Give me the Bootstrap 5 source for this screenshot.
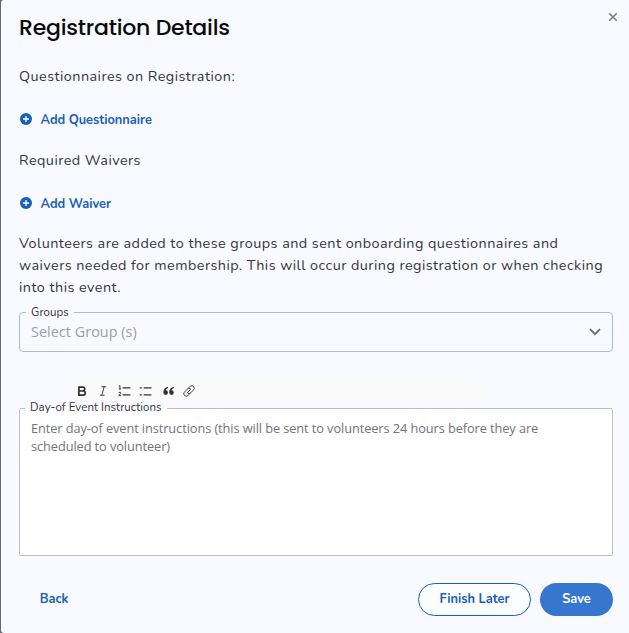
<!DOCTYPE html>
<html lang="en">
<head>
<meta charset="utf-8">
<meta name="viewport" content="width=device-width, initial-scale=1">
<title>Registration Details</title>
<link href="https://cdn.jsdelivr.net/npm/bootstrap@5.3.0/dist/css/bootstrap.min.css" rel="stylesheet">
<style>
body { background: #6a6a6e; font-family: Nunito, Lato, "Liberation Sans", sans-serif; height: 633px; overflow: hidden; }
.panel { background: #f9faff; margin-left: 1px; height: 633px; padding: 0 16px 0 18px; border-radius: 3px 0 0 3px; }
.panel-title { font: 500 22px/30px Poppins, Inter, sans-serif; color: #0a0a0a; letter-spacing: -.22px; padding-top: 13px; height: 43px; white-space: nowrap; }
.close-x { top: 12px; right: 11px; line-height: 0; background: none; }
.copy { color: #33363b; font-size: 14.4px; line-height: 22px; letter-spacing: .455px; white-space: nowrap; }
.add-link { color: #1660b8; font-size: 12.8px; font-weight: 700; line-height: 20px; gap: 7.5px; letter-spacing: -.02px; }
.add-link span { padding-top: 1px; height: 20px; }
.q-copy { margin-top: 22px; }
.add-q { margin: 22px 0 20px; }
.add-w { margin: 22px 0 19px; }
.field-label { top: -8px; left: 6px; padding: 0 5px; font-family: Nunito, Lato, sans-serif; font-size: 11.5px; line-height: 15px; color: #33363b; background: #f9faff; white-space: nowrap; }
.group-select { height: 40px; margin-top: 14px; border: 1px solid #abbddc; border-radius: 4px; padding: 0 11px 0 11px; font: 14.4px/20px "Open Sans", sans-serif; letter-spacing: .04px; color: #9c9fa3; }
.tools { height: 23px; margin: 27px 127px 0 52px; padding-left: 4px; background: #fafafb; }
.tools svg { width: 14px; height: 14px; margin-right: 7.4px; }
.editor { height: 148px; margin-top: 6px; background: #fff; border: 1px solid #bfbfc2; border-radius: 2px; padding: 10px 11px; font: 12.8px/18px "Open Sans", sans-serif; letter-spacing: -.09px; color: #737373; white-space: nowrap; }
.editor .field-label { left: 5px; top: -9px; letter-spacing: .04px; border-radius: 5px; background: linear-gradient(#f9faff 55%, #fff 55%); }
.actions { margin-top: 27px; height: 33px; }
.pill { font-size: 12.8px; font-weight: 700; line-height: 20px; height: 33px; padding: 0 0 1px; color: #1660b8; white-space: nowrap; }
.pill-back { width: 70px; }
.pill-later { width: 113px; border: 1px solid #1660b8; background: #fcfdff; }
.pill-save { width: 73px; background: #3676cf; color: #fff; margin-left: 9px; }
</style>
<script src="https://cdn.jsdelivr.net/npm/bootstrap@5.3.0/dist/js/bootstrap.bundle.min.js"></script>
</head>
<body>
<main class="panel position-relative d-flex flex-column">
  <button class="close-x position-absolute border-0 p-0" aria-label="Close"><svg width="10" height="10" viewBox="0 0 10 10" fill="none" stroke="#77797e" stroke-width="1.5"><path d="M1.2 1.2l7.6 7.6M8.800 1.2L1.2 8.800"/></svg></button>
  <h1 class="panel-title m-0">Registration Details</h1>
  <div class="copy q-copy">Questionnaires on Registration:</div>
  <a class="add-link add-q d-flex align-items-center text-decoration-none" href="#"><svg width="14" height="14" viewBox="0 0 14 14"><circle cx="7" cy="7" r="6" fill="#1660b8"/><path d="M7 4v6M4 7h6" stroke="#fff" stroke-width="1.3"/></svg><span>Add Questionnaire</span></a>
  <div class="copy">Required Waivers</div>
  <a class="add-link add-w d-flex align-items-center text-decoration-none" href="#"><svg width="14" height="14" viewBox="0 0 14 14"><circle cx="7" cy="7" r="6" fill="#1660b8"/><path d="M7 4v6M4 7h6" stroke="#fff" stroke-width="1.3"/></svg><span>Add Waiver</span></a>
  <p class="copy m-0">Volunteers are added to these groups and sent onboarding questionnaires and<br>waivers needed for membership. This will occur during registration or when checking<br>into this event.</p>
  <div class="group-select position-relative d-flex align-items-center justify-content-between">
    <span class="field-label position-absolute">Groups</span>
    <span>Select Group (s)</span>
    <svg width="12" height="8" viewBox="0 0 12 8" fill="none" stroke="#686b70" stroke-width="1.8"><path d="M1 1.2l5 5 5-5"/></svg>
  </div>
  <div class="tools d-flex align-items-center">
    <svg viewBox="0 0 18 18" fill="none" stroke="#333" stroke-width="2.2"><path d="M5 4h5a2.5 2.5 0 0 1 0 5H5zM5 9h5.5a2.7 2.7 0 0 1 0 5.400H5z"/></svg>
    <svg viewBox="0 0 18 18" fill="none" stroke="#333" stroke-width="1.2"><path d="M7 3.500h6M5 14.500h6M10.500 3.500l-3 11"/></svg>
    <svg viewBox="0 0 18 18" fill="none" stroke="#333" stroke-width="1.5"><path d="M6 5h10M6 14h10"/><path stroke-width="1.200" d="M1 3l1.500-1v4.500M1 6.500h3M1 11q3-1.500 2.500 1l-2.500 3h3"/></svg>
    <svg viewBox="0 0 18 18" fill="none" stroke="#333" stroke-width="1.6"><path d="M6 5h10M6 14h10M1 5h2.500M1 14h2.500"/></svg>
    <svg viewBox="0 0 18 18" fill="#333"><path d="M9 3.500C5 4 3 7 3 11a3 3 0 1 0 3-3q.5-2 3-3zM16.500 3.500c-4 .5-6 3.500-6 7.500a3 3 0 1 0 3-3q.5-2 3-3z"/></svg>
    <svg viewBox="0 0 18 18" fill="none" stroke="#333" stroke-width="1.2" stroke-linecap="round"><path d="M7 11l4-4M8 5.500l2.500-2.500a3.200 3.200 0 0 1 4.500 4.500l-4 4a3 3 0 0 1-3.500.5M10 12.500L7.500 15A3.200 3.200 0 0 1 3 10.500l4-4a3 3 0 0 1 3.500-.5"/></svg>
  </div>
  <div class="editor position-relative">
    <span class="field-label position-absolute">Day-of Event Instructions</span>
    Enter day-of event instructions (this will be sent to volunteers 24 hours before they are<br>scheduled to volunteer)
  </div>
  <div class="actions d-flex">
    <button class="btn pill pill-back rounded-pill border-0 me-auto">Back</button>
    <button class="btn pill pill-later rounded-pill">Finish Later</button>
    <button class="btn pill pill-save rounded-pill border-0">Save</button>
  </div>
</main>
</body>
</html>
